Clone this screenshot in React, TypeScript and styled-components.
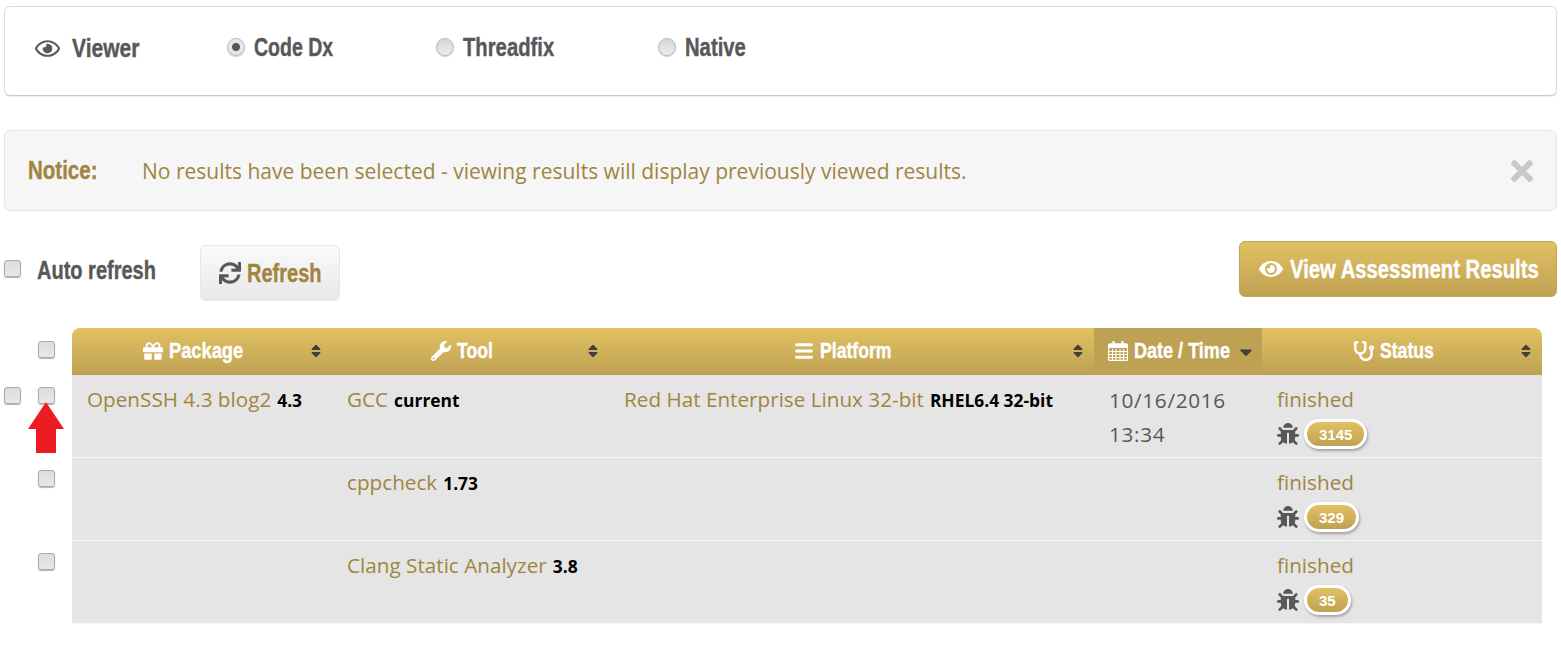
import { createGlobalStyle, styled } from "styled-components";
import { FaBars, FaBug, FaCaretDown, FaEye, FaGift, FaRegEye, FaSort, FaStethoscope, FaSync, FaTimes, FaWrench } from "react-icons/fa";

const gold = "#a08540";
const slate = "#58575a";
const Heading = `"Liberation Sans", sans-serif`;

const Global = createGlobalStyle`
  body {
    margin: 0;
    background: #fff;
    font-family: "Open Sans", sans-serif;
  }
`;

const Page = styled.div`
  position: relative;
  width: 1561px;
  height: 648px;
  overflow: hidden;
  box-sizing: border-box;
  padding: 6px 4px 0 4px;
`;

// the headings use a condensed face that isn't installed, so the text is squeezed
const Squeeze = styled.span<{ $w: number; $s?: number }>`
  display: inline-block;
  width: ${p => p.$w}px;
  white-space: nowrap;
  transform: scaleX(${p => p.$s ?? 0.8});
  transform-origin: left center;
  -webkit-text-stroke: 0.4px currentColor;
`;

const ViewerPanel = styled.div`
  box-sizing: border-box;
  height: 90px;
  border: 1px solid #dcdcdc;
  border-bottom: 1px solid #c8c8c8;
  border-radius: 6px;
  box-shadow: 0 1px 1px rgba(0, 0, 0, 0.08);
  display: flex;
  align-items: center;
  padding: 0 0 8px 30px;
  font-family: ${Heading};
  font-weight: 700;
  font-size: 25px;
  color: ${slate};
`;

const ViewerTitle = styled.div`
  display: flex;
  align-items: center;
  gap: 12px;
  width: 192px;
  padding-top: 3px;
`;

const RadioOption = styled.div<{ $width: number }>`
  display: flex;
  align-items: center;
  gap: 9px;
  width: ${p => p.$width}px;
`;

const Radio = styled.span<{ $on?: boolean }>`
  box-sizing: border-box;
  width: 18px;
  height: 18px;
  border-radius: 50%;
  border: 1px solid #bbb;
  background: ${p => (p.$on
    ? "radial-gradient(circle, #555 0 3.5px, #e6e6e6 4.5px)"
    : "linear-gradient(#d6d6d6, #ececec)")};
  box-shadow: 0 1px 1px rgba(0, 0, 0, 0.2);
`;

const Notice = styled.div`
  box-sizing: border-box;
  height: 81px;
  margin-top: 34px;
  background: #f6f6f6;
  border: 1px solid #e6e6e6;
  border-radius: 6px;
  display: flex;
  align-items: center;
  padding: 0 18px 0 23px;
  color: ${gold};
  font-size: 21px;
`;

const NoticeLabel = styled.strong`
  width: 114px;
  font-family: ${Heading};
  font-size: 25px;
`;

const NoticeText = styled.span`
  flex: 1;
`;

const Close = styled(FaTimes)`
  color: #c9c9c9;
  font-size: 32px;
`;

const Toolbar = styled.div`
  display: flex;
  align-items: flex-start;
  height: 87px;
  margin-top: 30px;
`;

const AutoRefresh = styled.div`
  display: flex;
  align-items: center;
  gap: 16px;
  width: 196px;
  height: 56px;
  font-family: ${Heading};
  font-weight: 700;
  font-size: 25px;
  color: ${slate};
  padding-bottom: 2px;
  box-sizing: border-box;
  span + span {
    margin-top: 4px;
  }
`;

const Check = styled.span`
  display: block;
  box-sizing: border-box;
  width: 17px;
  height: 17px;
  border: 1px solid #aaa;
  border-radius: 3px;
  background: linear-gradient(#dcdcdc, #e8e8e8);
  box-shadow: 0 1px 1px rgba(0, 0, 0, 0.3);
`;

const RefreshButton = styled.div`
  box-sizing: border-box;
  width: 140px;
  height: 56px;
  margin-top: 4px;
  display: flex;
  align-items: center;
  justify-content: center;
  gap: 6px;
  border: 1px solid #e6e6e6;
  border-radius: 6px;
  background: linear-gradient(#fafafa, #e8e8e8);
  color: ${gold};
  font-family: ${Heading};
  font-weight: 700;
  font-size: 25px;
  svg {
    color: ${slate};
    font-size: 22px;
  }
`;

const ViewButton = styled.div`
  box-sizing: border-box;
  margin-left: auto;
  width: 318px;
  height: 56px;
  display: flex;
  align-items: center;
  justify-content: center;
  gap: 7px;
  border: 1px solid #c4a655;
  border-radius: 6px;
  background: linear-gradient(#e2c162, #bfa153);
  color: #fff;
  font-family: ${Heading};
  font-weight: 700;
  font-size: 25px;
  svg {
    font-size: 24px;
  }
`;

const Table = styled.div`
  display: flex;
  flex-direction: column;
  width: 1538px;
`;

const Row = styled.div`
  display: grid;
  grid-template-columns: 68px 260px 277px 485px 168px 280px;
`;

const Gutter = styled.div<{ $head?: boolean }>`
  display: flex;
  align-items: flex-start;
  justify-content: flex-end;
  gap: 17px;
  padding: ${p => (p.$head ? "13px" : "12px")} 17px 0 0;
`;

const HeadCell = styled.div<{ $active?: boolean; $first?: boolean; $last?: boolean }>`
  position: relative;
  box-sizing: border-box;
  height: 47px;
  display: flex;
  align-items: center;
  justify-content: center;
  gap: 6px;
  padding: 0 18px 1px 0;
  color: #fff;
  font-family: ${Heading};
  font-weight: 700;
  font-size: 22px;
  background: ${p => (p.$active ? "#bfa153" : "linear-gradient(#e2c162, #bfa153)")};
  border-top-left-radius: ${p => (p.$first ? "8px" : "0")};
  border-top-right-radius: ${p => (p.$last ? "8px" : "0")};
  svg {
    font-size: 20px;
  }
`;

const SortMark = styled.span<{ $active?: boolean }>`
  position: absolute;
  right: ${p => (p.$active ? "6px" : "8px")};
  top: ${p => (p.$active ? "14px" : "15px")};
  display: flex;
  color: #3f3f3f;
  svg {
    font-size: ${p => (p.$active ? "20px" : "16px")};
  }
`;

const Cell = styled.div`
  box-sizing: border-box;
  height: 83px;
  padding: 8px 15px 0;
  background: #e5e5e5;
  border-bottom: 1px solid #f6f6f6;
  color: ${gold};
  font-size: 20.7px;
  line-height: 33px;
  white-space: nowrap;
`;

const Version = styled.b`
  color: #000;
  font-size: 17.4px;
  margin-left: 6px;
`;

const DateText = styled.div`
  color: ${slate};
  letter-spacing: 0.7px;
  line-height: 34px;
`;

const BugLine = styled.div`
  display: flex;
  align-items: center;
  gap: 5px;
  height: 28px;
  margin-top: 4px;
  svg {
    color: ${slate};
    font-size: 22px;
  }
`;

const Badge = styled.span`
  box-sizing: border-box;
  height: 30px;
  padding: 0 12px;
  display: flex;
  align-items: center;
  border: 3px solid #fff;
  border-radius: 15px;
  background: linear-gradient(#e2c162, #bfa153);
  color: #fff;
  font-family: "Liberation Sans", sans-serif;
  font-weight: 700;
  font-size: 15px;
  box-shadow: 1px 2px 3px rgba(0, 0, 0, 0.3);
`;

const Arrow = styled.svg`
  position: absolute;
  left: 28px;
  top: 402px;
`;

const CalendarIcon = () => (
  <svg width="20" height="20" viewBox="0 0 20 20" fill="none" stroke="#fff">
    <rect x="0.5" y="3" width="19" height="16.500" rx="1.500" strokeWidth="1.300" />
    <rect x="1" y="3" width="18" height="4" fill="#fff" stroke="none" />
    <path d="M4.500 8v11M8 8v11M12 8v11M15.500 8v11M1 10.500h18M1 13.500h18M1 16.500h18" strokeWidth="1" />
    <path d="M5.500 0.500v4M14.500 0.500v4" strokeWidth="2" strokeLinecap="round" />
  </svg>
);

const heads = [
  { icon: <FaGift />, label: "Package", width: 74, scale: 0.83 },
  { icon: <FaWrench />, label: "Tool", width: 35 },
  { icon: <FaBars />, label: "Platform", width: 71 },
  { icon: <CalendarIcon />, label: "Date / Time", width: 96, scale: 0.82, active: true },
  { icon: <FaStethoscope />, label: "Status", width: 53 },
];

const rows = [
  { outer: true, pkg: "OpenSSH 4.3 blog2", pkgV: "4.3", tool: "GCC", toolV: "current", plat: "Red Hat Enterprise Linux 32-bit", platV: "RHEL6.4 32-bit", date: "10/16/2016", time: "13:34", bugs: 3145 },
  { tool: "cppcheck", toolV: "1.73", bugs: 329 },
  { tool: "Clang Static Analyzer", toolV: "3.8", bugs: 35 },
];

export default function App() {
  return (
    <Page>
      <Global />
      <ViewerPanel>
        <ViewerTitle><FaRegEye size={25} /><Squeeze $w={68} $s={0.84}>Viewer</Squeeze></ViewerTitle>
        <RadioOption $width={209}><Radio $on /><Squeeze $w={79} $s={0.78}>Code Dx</Squeeze></RadioOption>
        <RadioOption $width={222}><Radio /><Squeeze $w={91} $s={0.81}>Threadfix</Squeeze></RadioOption>
        <RadioOption $width={120}><Radio /><Squeeze $w={61} $s={0.81}>Native</Squeeze></RadioOption>
      </ViewerPanel>

      <Notice>
        <NoticeLabel><Squeeze $w={70} $s={0.82}>Notice:</Squeeze></NoticeLabel>
        <NoticeText>No results have been selected - viewing results will display previously viewed results.</NoticeText>
        <Close />
      </Notice>

      <Toolbar>
        <AutoRefresh><Check /><Squeeze $w={119}>Auto refresh</Squeeze></AutoRefresh>
        <RefreshButton><FaSync /><Squeeze $w={74}>Refresh</Squeeze></RefreshButton>
        <ViewButton><FaEye /><Squeeze $w={248} $s={0.81}>View Assessment Results</Squeeze></ViewButton>
      </Toolbar>

      <Table>
        <Row>
          <Gutter $head><Check /></Gutter>
          {heads.map((h, i) => (
            <HeadCell key={h.label} $active={h.active} $first={i === 0} $last={i === heads.length - 1}>
              {h.icon}<Squeeze $w={h.width} $s={h.scale}>{h.label}</Squeeze>
              <SortMark $active={h.active}>{h.active ? <FaCaretDown /> : <FaSort />}</SortMark>
            </HeadCell>
          ))}
        </Row>
        {rows.map(r => (
          <Row key={r.tool}>
            <Gutter>{r.outer && <Check />}<Check /></Gutter>
            <Cell>{r.pkg}{r.pkgV && <Version>{r.pkgV}</Version>}</Cell>
            <Cell>{r.tool}<Version>{r.toolV}</Version></Cell>
            <Cell>{r.plat}{r.platV && <Version>{r.platV}</Version>}</Cell>
            <Cell>{r.date && <DateText>{r.date}<br />{r.time}</DateText>}</Cell>
            <Cell>
              finished
              <BugLine><FaBug /><Badge>{r.bugs}</Badge></BugLine>
            </Cell>
          </Row>
        ))}
      </Table>

      <Arrow width="36" height="51" viewBox="0 0 36 51">
        <path d="M18 0 L36 27 L28 27 L28 51 L8 51 L8 27 L0 27 Z" fill="#ed1c24" />
      </Arrow>
    </Page>
  );
}
